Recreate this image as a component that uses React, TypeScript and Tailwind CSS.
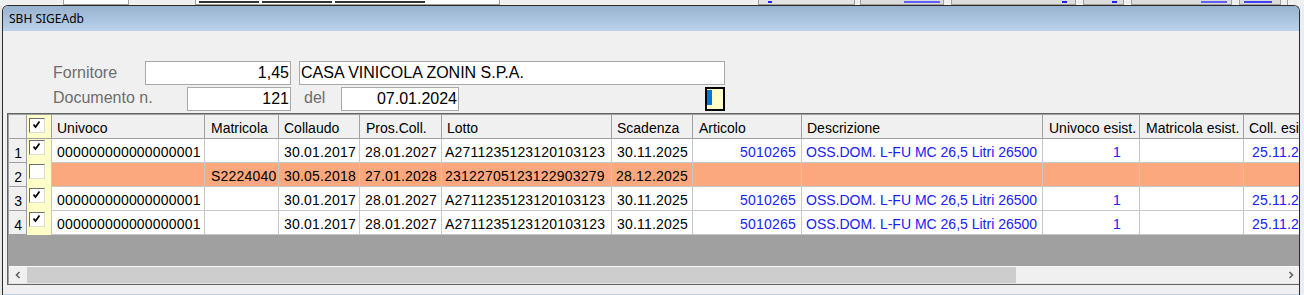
import React from "react";

// ─── grid columns ─────────────────────────────────────────────────────────────
type Col = {
  key: string;
  title: string;
  w: string;
  head: string;
  cell: string;
  color: string;
};

const columns: Col[] = [
  { key: "univoco", title: "Univoco", w: "w-[153px]", head: "pl-[5px]", cell: "justify-start pl-[5px]", color: "text-black" },
  { key: "matricola", title: "Matricola", w: "w-[74px]", head: "pl-[6px]", cell: "justify-start pl-[6px]", color: "text-black" },
  { key: "collaudo", title: "Collaudo", w: "w-[81px]", head: "pl-[5px]", cell: "justify-end pr-[3px]", color: "text-black" },
  { key: "pros", title: "Pros.Coll.", w: "w-[82px]", head: "pl-[6px]", cell: "justify-end pr-[4px]", color: "text-black" },
  { key: "lotto", title: "Lotto", w: "w-[170px]", head: "pl-[5px]", cell: "justify-start pl-[3px]", color: "text-black" },
  { key: "scadenza", title: "Scadenza", w: "w-[81px]", head: "pl-[5px]", cell: "justify-end pr-[4px]", color: "text-black" },
  { key: "articolo", title: "Articolo", w: "w-[109px]", head: "pl-[6px]", cell: "justify-end pr-[5px]", color: "text-[#2020ff]" },
  { key: "descr", title: "Descrizione", w: "w-[241px]", head: "pl-[5px]", cell: "justify-start pl-[4px] tracking-normal", color: "text-[#2020ff]" },
  { key: "univEs", title: "Univoco esist.", w: "w-[97px]", head: "pl-[6px]", cell: "justify-end pr-[18px]", color: "text-[#2020ff]" },
  { key: "matEs", title: "Matricola esist.", w: "w-[104px]", head: "pl-[6px]", cell: "justify-start pl-[6px]", color: "text-black" },
  { key: "collEs", title: "Coll. esist.", w: "w-[90px]", head: "pl-[5px]", cell: "justify-start pl-[8px]", color: "text-[#2020ff]" },
];

const okRow: Record<string, string> = {
  univoco: "000000000000000001",
  matricola: "",
  collaudo: "30.01.2017",
  pros: "28.01.2027",
  lotto: "A2711235123120103123",
  scadenza: "30.11.2025",
  articolo: "5010265",
  descr: "OSS.DOM. L-FU MC 26,5 Litri 26500",
  univEs: "1",
  matEs: "",
  collEs: "25.11.2024",
};

const rows = [
  { n: 1, checked: true, warn: false, data: okRow },
  {
    n: 2,
    checked: false,
    warn: true,
    data: {
      univoco: "",
      matricola: "S2224040",
      collaudo: "30.05.2018",
      pros: "27.01.2028",
      lotto: "23122705123122903279",
      scadenza: "28.12.2025",
    } as Record<string, string>,
  },
  { n: 3, checked: true, warn: false, data: okRow },
  { n: 4, checked: true, warn: false, data: okRow },
];

function CheckBox({ checked }: { checked: boolean }) {
  return (
    <div className="w-[16px] h-[15px] bg-white border border-t-[#6e6e6e] border-l-[#6e6e6e] border-r-[#dcdcdc] border-b-[#dcdcdc]">
      {checked && (
        <svg width="14" height="13" viewBox="0 0 14 13">
          <path d="M3.5 5.5 L5.5 8 L9.5 2.5" fill="none" stroke="#000" strokeWidth="1.7" />
        </svg>
      )}
    </div>
  );
}

// ─── background app strip peeking above the window ────────────────────────────
function BackStrip() {
  const box = "h-full border-x border-b border-[#a0a0a0] overflow-hidden flex items-end";
  return (
    <div className="h-[5px] flex overflow-hidden bg-[#f0f0f0]">
      <div className="w-[63px] shrink-0" />
      <div className={`w-[66px] shrink-0 bg-white ${box}`} />
      <div className="w-[66px] shrink-0" />
      <div className={`w-[305px] shrink-0 bg-white ${box} gap-[3px] pl-[3px] pb-[1px]`}>
        <div className="w-[60px] h-[2px] bg-[#333]" />
        <div className="w-[70px] h-[2px] bg-[#333]" />
        <div className="w-[90px] h-[2px] bg-[#333]" />
      </div>
      <div className="w-[258px] shrink-0" />
      <div className={`w-[97px] shrink-0 bg-[#e4e4e4] ${box} pl-[9px] pb-[1px]`}>
        <div className="w-[4px] h-[2px] bg-[#2020ff]" />
      </div>
      <div className="w-[5px] shrink-0" />
      <div className={`w-[84px] shrink-0 bg-[#dcdcdc] ${box} justify-end pr-[3px] pb-[1px]`}>
        <div className="w-[36px] h-[2px] bg-[#6060ff]" />
      </div>
      <div className="w-[7px] shrink-0" />
      <div className={`w-[125px] shrink-0 bg-[#dcdcdc] ${box} justify-end pr-[8px] pb-[1px]`}>
        <div className="w-[5px] h-[2px] bg-[#2020ff]" />
      </div>
      <div className="w-[7px] shrink-0" />
      <div className={`w-[41px] shrink-0 bg-[#dcdcdc] ${box} justify-end pr-[6px] pb-[1px]`}>
        <div className="w-[5px] h-[2px] bg-[#2020ff]" />
      </div>
      <div className="w-[7px] shrink-0" />
      <div className={`w-[101px] shrink-0 bg-[#dcdcdc] ${box} justify-end pr-[4px] pb-[1px]`}>
        <div className="w-[26px] h-[2px] bg-[#6060ff]" />
      </div>
      <div className="w-[7px] shrink-0" />
      <div className={`w-[42px] shrink-0 bg-[#dcdcdc] ${box} pl-[4px] pb-[1px]`}>
        <div className="w-[28px] h-[2px] bg-[#4040ff]" />
      </div>
      <div className="w-[6px] shrink-0" />
      <div className="w-[1px] shrink-0 bg-[#a0a0a0]" />
    </div>
  );
}

function Field({ w, children, align = "right" }: { w: string; children: React.ReactNode; align?: "left" | "right" }) {
  return (
    <div
      className={`${w} h-[24px] shrink-0 bg-white border border-[#a9a9a9] pt-[1px] leading-[20px] text-black whitespace-nowrap overflow-hidden ${
        align === "right" ? "text-right pr-[1px]" : "text-left pl-[1px]"
      }`}
    >
      {children}
    </div>
  );
}

export default function App() {
  return (
    <div className="w-[1304px] h-[295px] overflow-hidden bg-[#f0f0f0] font-['Liberation_Sans',Arial,sans-serif]">
      <BackStrip />
      <div className="flex">
        <div className="w-[2px] shrink-0 bg-[#e8e8e8]" />
        {/* ── Window ── */}
        <div className="w-[1298px] h-[290px] shrink-0 flex flex-col border-x border-t border-[#2b2b2b] rounded-t-[6px] overflow-hidden">
          <div className="h-[25px] shrink-0 flex items-center pl-[6px] bg-gradient-to-b from-[#98b2cf] to-[#bbd3ec] font-['Noto_Sans',sans-serif] text-[12px] text-black">
            SBH SIGEAdb
          </div>

          <div className="flex-1 flex flex-col bg-[#f0f0f0] pt-[30px] text-[16px]">
            {/* ── Form ── */}
            <div className="flex items-start">
              <div className="w-[50px] shrink-0" />
              <div className="w-[92px] shrink-0 pt-[2px] leading-[20px] text-[#6d6d6d]">Fornitore</div>
              <Field w="w-[146px]">1,45</Field>
              <div className="w-[8px] shrink-0" />
              <Field w="w-[426px]" align="left">CASA VINICOLA ZONIN S.P.A.</Field>
            </div>
            <div className="flex items-start mt-[2px]">
              <div className="w-[50px] shrink-0" />
              <div className="w-[134px] shrink-0 pt-[1px] leading-[20px] text-[#6d6d6d]">Documento n.</div>
              <Field w="w-[104px]">121</Field>
              <div className="w-[50px] shrink-0 pl-[13px] pt-[1px] leading-[20px] text-[#6d6d6d]">del</div>
              <Field w="w-[118px]">07.01.2024</Field>
              <div className="w-[246px] shrink-0" />
              <div className="w-[20px] h-[24px] shrink-0 border-2 border-black bg-[#ffffc8] pt-[1px]">
                <div className="w-[5px] h-[15px] bg-[#0078d7]" />
              </div>
            </div>

            {/* ── Grid ── */}
            <div className="mt-[2px] ml-[4px] w-[1292px] border-l border-t border-b border-[#646464]">
              <div className="border-l border-t border-b border-l-[#a0a0a0] border-t-[#a0a0a0] border-b-[#e3e3e3] overflow-hidden text-[14px]">
                {/* header */}
                <div className="flex h-[24px] w-max">
                  <div className="w-[18px] shrink-0 bg-[#f0f0f0] border-r border-b border-[#a0a0a0]" />
                  <div className="w-[25px] shrink-0 bg-[#ffffc8] border-r border-b border-[#a0a0a0] pl-[2px] pt-[3px]">
                    <CheckBox checked />
                  </div>
                  {columns.map((c) => (
                    <div
                      key={c.key}
                      className={`${c.w} ${c.head} shrink-0 bg-[#f0f0f0] border-r border-b border-r-[#a0a0a0] border-b-[#a0a0a0] pt-[5px] leading-[16px] text-black whitespace-nowrap overflow-hidden`}
                    >
                      {c.title}
                    </div>
                  ))}
                </div>

                {/* rows */}
                {rows.map((r) => (
                  <div key={r.n} className="flex h-[24px] w-max">
                    <div className="w-[18px] shrink-0 bg-[#f0f0f0] border-r border-b border-[#a0a0a0] flex justify-end pr-[4px] pt-[6px] leading-[16px] text-black">
                      {r.n}
                    </div>
                    <div className="w-[25px] shrink-0 bg-[#ffffc8] border-r border-[#c8c8c8] pl-[2px] pt-[1px]">
                      <CheckBox checked={r.checked} />
                    </div>
                    {columns.map((c) => (
                      <div
                        key={c.key}
                        className={`${c.w} ${c.cell} ${c.color} shrink-0 flex border-r border-b border-[#c8c8c8] pt-[5px] leading-[16px] tracking-[0.2px] whitespace-nowrap overflow-hidden ${
                          r.warn ? "bg-[#fba87e]" : "bg-white"
                        }`}
                      >
                        {r.data[c.key] ?? ""}
                      </div>
                    ))}
                  </div>
                ))}

                {/* empty area */}
                <div className="h-[31px] bg-[#a0a0a0]" />

                {/* horizontal scrollbar */}
                <div className="h-[17px] flex bg-[#f0f0f0] border-t border-[#f8f8f8]">
                  <div className="w-[18px] shrink-0 flex items-center justify-center">
                    <svg width="8" height="8" viewBox="0 0 8 8">
                      <path d="M5.5 1 L2.5 4 L5.5 7" fill="none" stroke="#606060" strokeWidth="1.6" />
                    </svg>
                  </div>
                  <div className="w-[989px] shrink-0 bg-[#cdcdcd]" />
                  <div className="flex-1" />
                  <div className="w-[17px] shrink-0 flex items-center justify-center">
                    <svg width="8" height="8" viewBox="0 0 8 8">
                      <path d="M2.5 1 L5.5 4 L2.5 7" fill="none" stroke="#606060" strokeWidth="1.6" />
                    </svg>
                  </div>
                </div>
              </div>
            </div>

            <div className="flex-1" />
            <div className="h-[1px] bg-[#b9d1ea]" />
          </div>
        </div>
        <div className="flex-1 bg-[#e8eef5]" />
      </div>
    </div>
  );
}
